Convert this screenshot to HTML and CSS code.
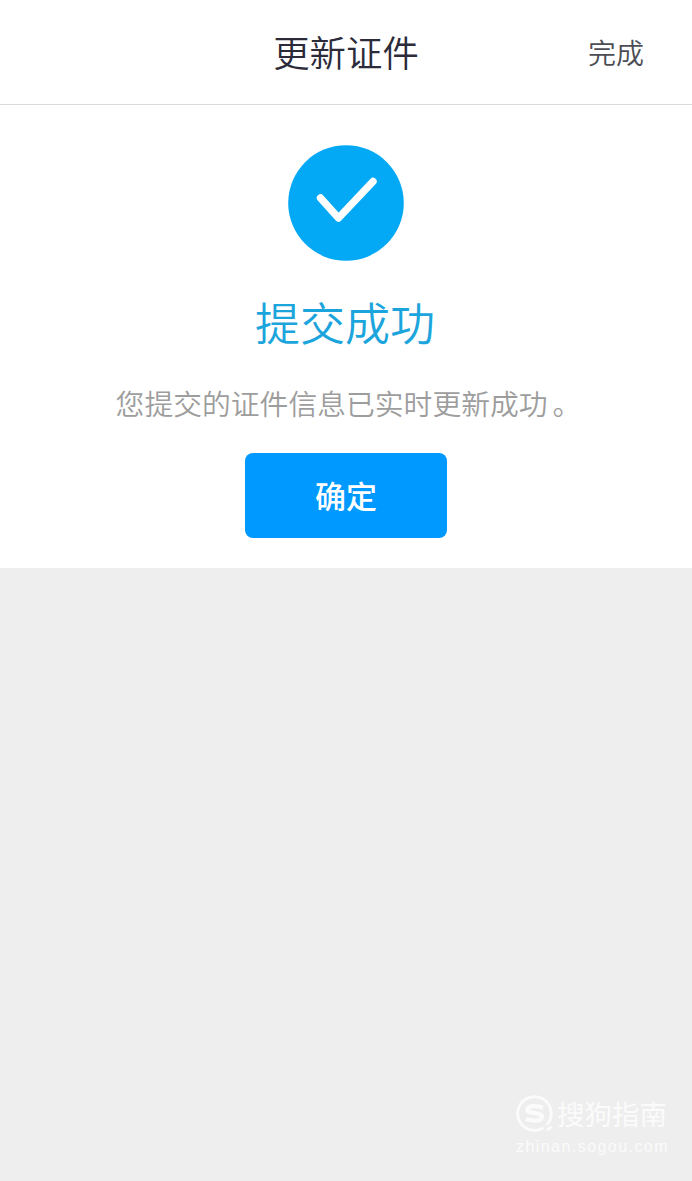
FILE: index.html
```
<!DOCTYPE html>
<html lang="zh-CN">
<head>
<meta charset="utf-8">
<meta name="viewport" content="width=device-width, initial-scale=1">
<title>更新证件</title>
<link rel="stylesheet" href="styles.css">
</head>
<body>

<header class="header">
	<span></span>
	<h1 class="title">更新证件</h1>
	<a class="done">完成</a>
</header>

<main class="result">
	<svg class="icon" viewBox="0 0 116 116">
		<circle cx="58" cy="58" r="57.8" fill="#03a9f4"/>
		<path d="M32.5 53 L50.5 73 L85 36.5" fill="none" stroke="#fff" stroke-width="7.4" stroke-linecap="round" stroke-linejoin="round"/>
	</svg>
	<h2 class="status">提交成功</h2>
	<p class="desc">您提交的证件信息已实时更新成功<span class="stop">。</span></p>
	<button class="btn" type="button">确定</button>
</main>

<footer class="footer">
	<div class="brand">
		<svg class="logo" viewBox="0 0 38 38">
			<circle cx="18.5" cy="18.5" r="16.8" fill="none" stroke="#fbfbfb" stroke-width="2.8" stroke-dasharray="100.6 5" transform="rotate(57 18.5 18.5)"/>
			<path d="M27 12.8 C22 10.8 12 10 11.5 14.5 C11.5 19.5 26 16.5 26 22 C25.5 27 15 26 10 23.8" fill="none" stroke="#fbfbfb" stroke-width="4.2"/>
			<path d="M31 35.5 L35.5 31.5" stroke="#fbfbfb" stroke-width="2.8"/>
		</svg>
		<span class="name">搜狗指南</span>
	</div>
	<div class="site">zhinan.sogou.com</div>
</footer>

</body>
</html>
```
FILE: styles.css
```
* {box-sizing:border-box;}

body {
	margin:0; min-height:1181px; display:flex; flex-direction:column;
	background-color:#eee;
	font-family:"Noto Sans CJK SC", "Liberation Sans", sans-serif;
	font-weight:350;
}

h1, h2, p {margin:0; font-weight:350;}

/* header */
.header {
	display:grid; grid-template-columns:1fr auto 1fr; align-items:center;
	height:105px; padding:0 48px;
	background-color:#fff; border-bottom:1px solid #dadada;
}
.title {padding-bottom:2px; font-size:36.4px; line-height:52px; color:#2c2b3a;}
.done {justify-self:end; font-size:28px; line-height:40px; color:#4c4e54;}

/* result */
.result {
	display:flex; flex-direction:column; align-items:center;
	height:463px; padding-top:40px;
	background-color:#fff;
}
.icon {width:116px; height:116px; flex:none;}
.status {margin-top:28px; padding-right:2px; font-size:45px; line-height:66px; color:#1ba5dc;}
.desc {margin-top:27px; font-size:28.8px; line-height:42px; white-space:nowrap; color:#9d9d9d;}
.stop {padding-left:5px; margin-right:-5px;}
.btn {
	width:202px; height:85px; margin-top:29px; padding:0 0 2px;
	background-color:#0099ff; border:0; border-radius:8px;
	font-family:inherit; font-size:31px; font-weight:500; line-height:44px; color:#fff;
}

/* footer */
.footer {margin-top:auto; padding:0 23px 24px 0; align-self:flex-end; color:#fbfbfb;}
.brand {display:flex; align-items:center; height:42px; margin-bottom:2px;}
.logo {width:38px; height:38px; margin-right:3px;}
.name {padding-bottom:3px; font-size:27.5px; line-height:40px; font-weight:400;}
.site {font-family:"Liberation Sans", Arial, sans-serif; font-size:16px; line-height:20px; letter-spacing:1.45px; font-weight:400;}
```
